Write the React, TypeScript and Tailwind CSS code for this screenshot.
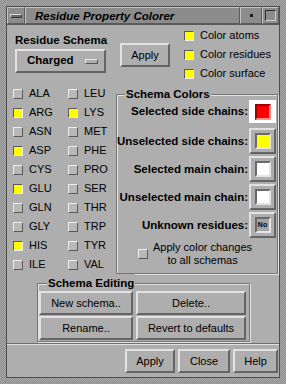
import React from "react";

const raised =
  "border-2 border-t-[#e2e2e2] border-l-[#e2e2e2] border-b-[#646464] border-r-[#646464]";
const font = "font-['Liberation_Sans',Arial,sans-serif]";

function Btn({ children, className = "" }: { children?: React.ReactNode; className?: string }) {
  return (
    <div className={`${raised} bg-[#aeaeae] flex items-center justify-center text-[11px] text-black ${className}`}>
      {children}
    </div>
  );
}

function Toggle({ on }: { on: boolean }) {
  return (
    <div
      className={`w-[10px] h-[10px] shrink-0 border ${
        on
          ? "bg-[#ffff00] border-t-[#5a5a5a] border-l-[#5a5a5a] border-b-[#eeeeee] border-r-[#eeeeee]"
          : "bg-[#b8b8b8] border-t-[#eeeeee] border-l-[#eeeeee] border-b-[#5a5a5a] border-r-[#5a5a5a]"
      }`}
    />
  );
}

const residues: [string, boolean, string, boolean][] = [
  ["ALA", false, "LEU", false],
  ["ARG", true, "LYS", true],
  ["ASN", false, "MET", false],
  ["ASP", true, "PHE", false],
  ["CYS", false, "PRO", false],
  ["GLU", true, "SER", false],
  ["GLN", false, "THR", false],
  ["GLY", false, "TRP", false],
  ["HIS", true, "TYR", false],
  ["ILE", false, "VAL", false],
];

function ColorRow({ label, children }: { label: string; children: React.ReactNode }) {
  return (
    <div className="flex items-start justify-end h-[28px]">
      <span className="font-bold text-[11.5px] leading-[26px] mr-[1px] whitespace-nowrap">{label}</span>
      {children}
    </div>
  );
}

function Swatch({ color }: { color: string }) {
  return (
    <div className={`${raised} w-[27px] h-[26px] flex items-center justify-center bg-[#aeaeae]`}>
      <div
        className="w-[16px] h-[16px] border-2 border-t-[#6a6a6a] border-l-[#6a6a6a] border-b-[#e4e4e4] border-r-[#e4e4e4]"
        style={{ backgroundColor: color }}
      />
    </div>
  );
}

export default function App() {
  const etched =
    "border border-[#777777] shadow-[inset_1px_1px_0_#e2e2e2,1px_1px_0_#e2e2e2]";
  return (
    <div
      className={`${font} w-[286px] h-[384px] p-[6px] bg-[repeating-conic-gradient(#8e8e8e_0_25%,#a6a6a6_0_50%)] bg-[length:2px_2px] text-black`}
    >
      <div className="w-[274px] h-[372px] border border-[#4e4e4e] flex flex-col">
        {/* title bar */}
        <div className="h-[18px] flex bg-[#8c8c8c] border-b border-[#5a5a5a]">
          <div className="w-[18px] h-full border border-t-[#c4c4c4] border-l-[#c4c4c4] border-b-[#5a5a5a] border-r-[#5a5a5a] flex items-center justify-center">
            <div className="w-[12px] h-[4px] bg-[#6a6a6a] border border-t-[#d8d8d8] border-l-[#d8d8d8] border-b-[#3a3a3a] border-r-[#3a3a3a]" />
          </div>
          <div className="flex-1 h-full border border-t-[#c4c4c4] border-l-[#c4c4c4] border-b-[#5a5a5a] border-r-[#5a5a5a] flex items-center pl-[9px]">
            <span className="font-bold italic text-[11.5px] leading-[14px] whitespace-nowrap">
              Residue Property Colorer
            </span>
          </div>
          <div className="w-[22px] h-full border border-t-[#c4c4c4] border-l-[#c4c4c4] border-b-[#5a5a5a] border-r-[#5a5a5a] flex items-center justify-center">
            <div className="w-[3px] h-[3px] bg-[#1a1a1a]" />
          </div>
          <div className="w-[17px] h-full border border-t-[#c4c4c4] border-l-[#c4c4c4] border-b-[#5a5a5a] border-r-[#5a5a5a] flex items-center justify-center">
            <div className="w-[11px] h-[11px] border border-t-[#2a2a2a] border-l-[#2a2a2a] border-b-[#d0d0d0] border-r-[#d0d0d0]" />
          </div>
        </div>

        {/* client */}
        <div className="flex-1 bg-[#aeaeae] flex flex-col">
          {/* top row */}
          <div className="flex h-[59px]">
            <div className="ml-[8px] w-[91px]">
              <div className="mt-[8px] h-[14px] leading-[14px] font-bold text-[11.5px] whitespace-nowrap">
                Residue Schema
              </div>
              <div className={`${raised} mt-[2px] h-[24px] flex items-center pl-[10px] pr-[4px]`}>
                <span className="font-bold text-[11.5px] flex-1">Charged</span>
                <div className="w-[13px] h-[5px] mr-[2px] border border-t-[#e8e8e8] border-l-[#e8e8e8] border-b-[#555] border-r-[#555]" />
              </div>
            </div>
            <Btn className="ml-[14px] mt-[18px] w-[50px] h-[24px]">Apply</Btn>
            <div className="ml-[14px] mt-[1px] flex flex-col">
              {["Color atoms", "Color residues", "Color surface"].map((t) => (
                <div key={t} className="h-[19px] flex items-center gap-[6px]">
                  <Toggle on={true} />
                  <span className="text-[11px] whitespace-nowrap">{t}</span>
                </div>
              ))}
            </div>
          </div>

          {/* body */}
          <div className="flex">
            <div className="w-[109px] pl-[6px] flex flex-col">
              {residues.map(([a, ao, b, bo]) => (
                <div key={a} className="h-[19px] flex items-center">
                  <div className="w-[55px] flex items-center gap-[6px]">
                    <Toggle on={ao} />
                    <span className="text-[11px]">{a}</span>
                  </div>
                  <div className="flex items-center gap-[6px]">
                    <Toggle on={bo} />
                    <span className="text-[11px]">{b}</span>
                  </div>
                </div>
              ))}
            </div>
            <fieldset className={`w-[162px] h-[190px] m-0 p-0 ${etched} pr-[1px] self-start`}>
              <legend className="ml-[8px] px-[1px] bg-[#aeaeae] font-bold text-[11.5px] leading-[20px]">
                Schema Colors
              </legend>
              <div className="-mt-[4px] flex flex-col">
                <div className="flex items-start justify-end h-[28px]">
                  <span className="font-bold text-[11.5px] leading-[23px] mr-[1px] whitespace-nowrap">
                    Selected side chains:
                  </span>
                  <div className="w-[27px] h-[23px] bg-white flex items-center justify-center">
                    <div className="w-[16px] h-[16px] border-2 border-t-[#a00000] border-l-[#a00000] border-b-[#ff9090] border-r-[#ff9090] bg-[#ff0000]" />
                  </div>
                </div>
                <ColorRow label="Unselected side chains:">
                  <Swatch color="#ffff00" />
                </ColorRow>
                <ColorRow label="Selected main chain:">
                  <Swatch color="#ffffff" />
                </ColorRow>
                <ColorRow label="Unselected main chain:">
                  <Swatch color="#ffffff" />
                </ColorRow>
                <ColorRow label="Unknown residues:">
                  <div className={`${raised} w-[27px] h-[26px] flex items-center justify-center bg-[#aeaeae]`}>
                    <div className="w-[16px] h-[16px] border-2 border-t-[#6a6a6a] border-l-[#6a6a6a] border-b-[#e4e4e4] border-r-[#e4e4e4] bg-[#a4a4a4] flex items-center justify-center">
                      <span className="font-bold text-[7px] leading-[8px]">No</span>
                    </div>
                  </div>
                </ColorRow>
                <div className="flex items-center pl-[21px] gap-[5px] mt-[1px]">
                  <Toggle on={false} />
                  <div className="text-[11px] leading-[13px] text-center">
                    Apply color changes
                    <br />
                    to all schemas
                  </div>
                </div>
              </div>
            </fieldset>
          </div>

          {/* schema editing */}
          <fieldset className={`ml-[30px] w-[213px] m-0 p-0 ${etched}`}>
            <legend className="ml-[9px] px-[1px] bg-[#aeaeae] font-bold text-[11.5px] leading-[18px]">
              Schema Editing
            </legend>
            <div className="-mt-[1px] pl-[1px] pb-[1px] grid grid-cols-[94px_110px] gap-x-[3px] gap-y-[1px]">
              <Btn className="h-[24px]">New schema..</Btn>
              <Btn className="h-[24px]">Delete..</Btn>
              <Btn className="h-[24px]">Rename..</Btn>
              <Btn className="h-[24px]">Revert to defaults</Btn>
            </div>
          </fieldset>

          <div className="mt-[1px] h-[2px] border-t border-t-[#6e6e6e] border-b border-b-[#e2e2e2]" />

          <div className="mt-[4px] flex justify-end gap-[3px] pr-[1px]">
            <Btn className="w-[50px] h-[24px]">Apply</Btn>
            <Btn className="w-[52px] h-[24px]">Close</Btn>
            <Btn className="w-[45px] h-[24px]">Help</Btn>
          </div>
        </div>
      </div>
    </div>
  );
}
